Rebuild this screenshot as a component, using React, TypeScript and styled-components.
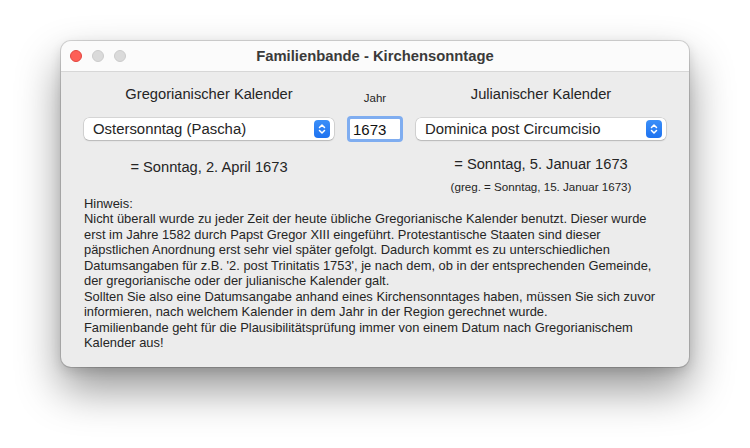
import React from 'react';
import styled, { createGlobalStyle } from 'styled-components';

const GlobalStyle = createGlobalStyle`
  html, body, #root {
    min-height: 100%;
    height: 100%;
  }
  body {
    margin: 0;
    background: #ffffff;
    font-family: "Liberation Sans", Arial, sans-serif;
    color: #252525;
  }
`;

const Desktop = styled.div`
  min-height: 448px;
  padding: 41px 0 0 61px;
  box-sizing: border-box;
  overflow: hidden;
`;

const Window = styled.div`
  width: 628px;
  height: 326px;
  border-radius: 10px;
  overflow: hidden;
  background: #ececec;
  box-shadow: 0 0 0 1px rgba(0, 0, 0, 0.14), 0 22px 44px rgba(0, 0, 0, 0.42),
    0 4px 12px rgba(0, 0, 0, 0.12);
`;

const TitleBar = styled.div`
  position: relative;
  height: 30px;
  display: flex;
  align-items: center;
  justify-content: center;
  background: #fbfbfb;
  border-bottom: 1px solid #d7d7d7;
`;

const Lights = styled.div`
  position: absolute;
  left: 9px;
  top: 9px;
  display: flex;
  gap: 10px;
`;

const Light = styled.span<{ $color: string; $ring: string }>`
  width: 12px;
  height: 12px;
  box-sizing: border-box;
  border-radius: 50%;
  background: ${(p) => p.$color};
  border: 0.5px solid ${(p) => p.$ring};
`;

const Title = styled.div`
  font-weight: bold;
  font-size: 14.8px;
  color: #3a3a3a;
`;

const Content = styled.div`
  padding: 13px 23px 0 23px;
`;

const Grid = styled.div`
  display: grid;
  grid-template-columns: 250px 56px 250px;
  column-gap: 13px;
  align-items: start;
`;

const Label = styled.div<{ $small?: boolean }>`
  text-align: center;
  font-size: ${(p) => (p.$small ? '11.5px' : '14.7px')};
  line-height: ${(p) => (p.$small ? '14px' : '18px')};
  margin-top: ${(p) => (p.$small ? '6px' : '0')};
`;

const Popup = styled.div`
  height: 22px;
  margin-top: 13px;
  display: flex;
  align-items: center;
  justify-content: space-between;
  padding: 0 4px 0 9px;
  background: #ffffff;
  border-radius: 5px;
  font-size: 14.9px;
  box-shadow: 0 0 0 0.5px rgba(0, 0, 0, 0.18), 0 1px 1.5px rgba(0, 0, 0, 0.15);
`;

const Stepper = styled.span`
  width: 16px;
  height: 18px;
  border-radius: 4px;
  background: linear-gradient(#3b8ff8, #1e72f0);
  display: flex;
  align-items: center;
  justify-content: center;
`;

const YearField = styled.div`
  height: 26px;
  margin-top: 11px;
  box-sizing: border-box;
  background: #ffffff;
  border: 3px solid #7fadf0;
  border-radius: 4px;
  padding: 0 0 0 3px;
  display: flex;
  align-items: center;
  font-size: 15px;
  color: #111;
`;

const Result = styled.div<{ $offset: number }>`
  text-align: center;
  font-size: 14.7px;
  line-height: 18px;
  margin-top: ${(p) => p.$offset}px;
`;

const Note = styled.div`
  text-align: center;
  font-size: 11.6px;
  line-height: 14px;
  margin-top: 7px;
`;

const Hint = styled.div`
  margin-top: 2px;
  font-size: 12.9px;
  line-height: 15.45px;
  white-space: nowrap;
`;

const Chevrons = () => (
  <svg width="10" height="12" viewBox="0 0 10 12">
    <path d="M2.5 4.5 L5 2 L7.5 4.5 M2.5 7.5 L5 10 L7.5 7.5" fill="none" stroke="#fff" strokeWidth="1.5" strokeLinecap="round" strokeLinejoin="round" />
  </svg>
);

const hintLines = [
  'Hinweis:',
  'Nicht überall wurde zu jeder Zeit der heute übliche Gregorianische Kalender benutzt. Dieser wurde',
  'erst im Jahre 1582 durch Papst Gregor XIII eingeführt. Protestantische Staaten sind dieser',
  'päpstlichen Anordnung erst sehr viel später gefolgt. Dadurch kommt es zu unterschiedlichen',
  "Datumsangaben für z.B. '2. post Trinitatis 1753', je nach dem, ob in der entsprechenden Gemeinde,",
  'der gregorianische oder der julianische Kalender galt.',
  'Sollten Sie also eine Datumsangabe anhand eines Kirchensonntages haben, müssen Sie sich zuvor',
  'informieren, nach welchem Kalender in dem Jahr in der Region gerechnet wurde.',
  'Familienbande geht für die Plausibilitätsprüfung immer von einem Datum nach Gregorianischem',
  'Kalender aus!',
];

const App = () => (
  <>
    <GlobalStyle />
    <Desktop>
      <Window>
        <TitleBar>
          <Lights>
            <Light $color="#fe5f57" $ring="#e2463f" />
            <Light $color="#dadada" $ring="#cbcbcb" />
            <Light $color="#dadada" $ring="#cbcbcb" />
          </Lights>
          <Title>Familienbande - Kirchensonntage</Title>
        </TitleBar>
        <Content>
          <Grid>
            <Label>Gregorianischer Kalender</Label>
            <Label $small>Jahr</Label>
            <Label>Julianischer Kalender</Label>

            <Popup>
              Ostersonntag (Pascha)
              <Stepper><Chevrons /></Stepper>
            </Popup>
            <YearField>1673</YearField>
            <Popup>
              Dominica post Circumcisio
              <Stepper><Chevrons /></Stepper>
            </Popup>

            <div>
              <Result $offset={16}>= Sonntag, 2. April 1673</Result>
            </div>
            <div />
            <div>
              <Result $offset={13}>= Sonntag, 5. Januar 1673</Result>
              <Note>(greg. = Sonntag, 15. Januar 1673)</Note>
            </div>
          </Grid>
          <Hint>
            {hintLines.map((l) => (
              <div key={l}>{l}</div>
            ))}
          </Hint>
        </Content>
      </Window>
    </Desktop>
  </>
);

export default App;
